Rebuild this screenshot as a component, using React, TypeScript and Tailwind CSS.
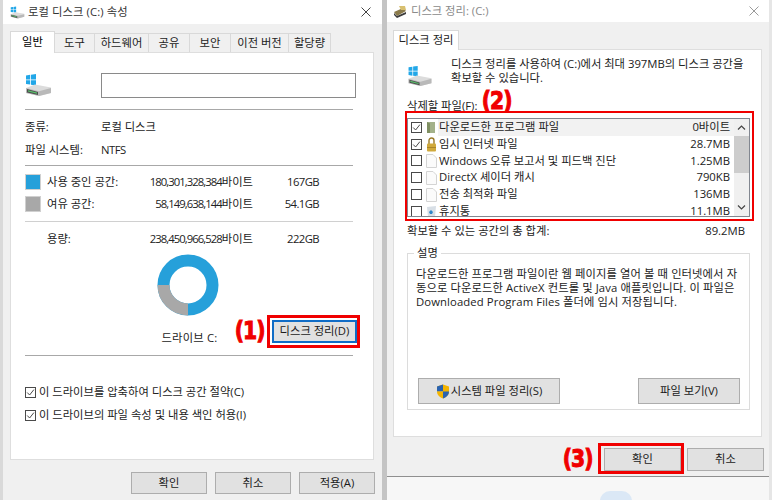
import React from "react";

const F = "font-['Open_Sans','Noto_Sans_CJK_KR',sans-serif]";

function DriveIcon({ w = 27, h = 24 }: { w?: number; h?: number }) {
  return (
    <svg width={w} height={h} viewBox="0 0 27 24">
      <g fill="#22a7e8">
        <path d="M1 2.500 5.200 1.800V6.400H1Z" />
        <path d="M6 1.700 11 1V6.400H6Z" />
        <path d="M1 7.200H5.200V11.600L1 11Z" />
        <path d="M6 7.200H11V12.400L6 11.700Z" />
      </g>
      <path d="M1 15 10 11.500 26 14.500V20L14 23 1 20Z" fill="#dcdcdc" />
      <path d="M1 15 14 18.200 26 15V20L14 23 1 20Z" fill="#b9b9b9" />
      <path d="M2 16 13 19V22L2 19.400Z" fill="#4d4d4d" />
      <path d="M3 17.200 12 19.600V20.800L3 18.600Z" fill="#57c26a" />
    </svg>
  );
}

function CleanIcon() {
  return (
    <svg width="14" height="13" viewBox="0 0 14 13">
      <path d="M1 7 10 3 13 6 4 11Z" fill="#8a7a4a" />
      <path d="M1 8 4 11 13 7V9L4 13 1 10Z" fill="#3b3b3b" />
      <path d="M6 1 12 1 13 5 8 5Z" fill="#d8c070" />
    </svg>
  );
}

function Check({ on }: { on: boolean }) {
  return (
    <span className="shrink-0 w-[11px] h-[11px] flex items-center justify-center bg-white border border-[#4a4a4a]">
      {on && (
        <svg width="9" height="9" viewBox="0 0 9 9">
          <path d="M1.200 4.500 3.600 7 7.900 1.600" fill="none" stroke="#4a4a4a" strokeWidth="1" />
        </svg>
      )}
    </span>
  );
}

function WinButton({ className, children }: { className: string; children: React.ReactNode }) {
  return (
    <div
      className={`flex items-center justify-center whitespace-nowrap bg-[#e1e1e1] border border-[#adadad] text-[11.3px] text-[#1a1a1a] ${className}`}
    >
      {children}
    </div>
  );
}

function Mark({ children, className }: { children: string; className: string }) {
  return (
    <span
      className={`absolute font-['DejaVu_Sans_Condensed','DejaVu_Sans',sans-serif] font-bold text-[25px] leading-none text-[#f00000] scale-x-[0.9] tracking-[-1px] [-webkit-text-stroke:1px_#f00000] ${className}`}
    >
      {children}
    </span>
  );
}

function TabLabel({ children, w }: { children: string; w: string }) {
  return (
    <div className={`${w} h-[19px] mt-[2px] flex items-center justify-center bg-[#f0f0f0] border border-b-0 border-l-0 border-[#d9d9d9] text-[11.3px] text-[#222] whitespace-nowrap`}>
      {children}
    </div>
  );
}

function Hr({ className }: { className: string }) {
  return <div className={`w-[328px] h-px bg-[#a8a8a8] ${className}`} />;
}

function Bytes({ n }: { n: string }) {
  return (
    <>
      <span className="tracking-[-0.95px]">{n}</span>바이트
    </>
  );
}

function Usage({ color, label, bytes, size }: { color: string; label: string; bytes: string; size: string }) {
  return (
    <div className="flex items-center h-[16px] whitespace-nowrap">
      <span className={`w-[16px] h-[16px] ${color} border border-[#d0d0d0]`} />
      <span className="w-[89px] ml-[6px]">{label}</span>
      <span className="w-[117px] text-right"><Bytes n={bytes} /></span>
      <span className="w-[66px] text-right tracking-[-0.6px]">{size}</span>
    </div>
  );
}

function LeftWindow() {
  return (
    <div className="absolute left-[3px] top-0 w-[379px] h-[500px] bg-[#f0f0f0] flex flex-col text-[11.3px]">
      <div className="h-[24px] bg-white flex items-center pl-[7px] pr-[11px] text-[#333]">
        <DriveIcon w={15} h={13} />
        <span className="ml-[3px] tracking-[0.1px]">로컬 디스크 (C:) 속성</span>
        <svg className="ml-auto" width="10" height="10" viewBox="0 0 10 10">
          <path d="M.500.500 9.500 9.500M9.500.500.500 9.500" stroke="#444" strokeWidth="1" />
        </svg>
      </div>
      <div className="flex pl-[7px] mt-[7px] h-[21px] relative z-10">
        <div className="w-[45px] h-[22px] flex items-center justify-center bg-white border border-b-0 border-[#d9d9d9]">일반</div>
        <TabLabel w="w-[40px]">도구</TabLabel>
        <TabLabel w="w-[54px]">하드웨어</TabLabel>
        <TabLabel w="w-[41px]">공유</TabLabel>
        <TabLabel w="w-[41px]">보안</TabLabel>
        <TabLabel w="w-[58px]">이전 버전</TabLabel>
        <TabLabel w="w-[42px]">할당량</TabLabel>
      </div>
      <div className="ml-[7px] w-[364px] h-[408px] bg-white border border-[#dedede] pl-[14px] text-[#222] flex flex-col relative">
        <div className="flex mt-[20px] h-[24px]">
          <div className="w-[76px]"><DriveIcon /></div>
          <div className="w-[255px] h-[25px] border border-[#8a8a8a]" />
        </div>
        <Hr className="mt-[12px]" />
        <div className="flex items-center mt-[7px] h-[20px]"><span className="w-[76px]">종류:</span><span>로컬 디스크</span></div>
        <div className="flex items-center mt-[3px] h-[20px]"><span className="w-[76px]">파일 시스템:</span><span className="tracking-[-0.5px]">NTFS</span></div>
        <Hr className="mt-[5px]" />
        <div className="mt-[8px] flex flex-col gap-[6px]">
          <Usage color="bg-[#26a0da]" label="사용 중인 공간:" bytes="180,301,328,384" size="167GB" />
          <Usage color="bg-[#a8a8a8]" label="여유 공간:" bytes="58,149,638,144" size="54.1GB" />
        </div>
        <Hr className="mt-[9px] h-[2px] bg-[#d0d0d0]" />
        <div className="flex items-center mt-[8px] h-[18px] pl-[22px] whitespace-nowrap">
          <span className="w-[89px]">용량:</span>
          <span className="w-[117px] text-right"><Bytes n="238,450,966,528" /></span>
          <span className="w-[66px] text-right tracking-[-0.6px]">222GB</span>
        </div>
        <div className="flex justify-center w-[327px] mt-[6px]">
          <svg className="ml-[-1px]" width="62" height="62" viewBox="0 0 62 62">
            <circle cx="31" cy="31" r="24.500" fill="none" stroke="#26a0da" strokeWidth="12" />
            <path d="M31 55.500A24.500 24.500 0 0 1 6.500 31" fill="none" stroke="#a8a8a8" strokeWidth="12" />
          </svg>
        </div>
        <div className="w-[328px] text-center mt-[13px] h-[18px] leading-[18px] pl-[1px] tracking-[0.2px]">드라이브 C:</div>
        <Hr className="mt-[8px]" />
        <div className="mt-[30px] flex flex-col gap-[10px]">
          <div className="flex items-center h-[13px] gap-[3px] whitespace-nowrap"><Check on /><span>이 드라이브를 압축하여 디스크 공간 절약(C)</span></div>
          <div className="flex items-center h-[13px] gap-[3px] whitespace-nowrap"><Check on /><span>이 드라이브의 파일 속성 및 내용 색인 허용(I)</span></div>
        </div>
        <WinButton className="absolute left-[261px] top-[267px] w-[85px] h-[23px] !border-2 !border-[#0f6cc6]">디스크 정리(D)</WinButton>
        <div className="absolute left-[256px] top-[262px] w-[93px] h-[33px] border-[3px] border-[#f00000]" />
        <Mark className="left-[222px] top-[265px]">(1)</Mark>
      </div>
      <div className="flex justify-end gap-[8px] pr-[7px] mt-[12px]">
        <WinButton className="w-[76px] h-[22px]">확인</WinButton>
        <WinButton className="w-[76px] h-[22px]">취소</WinButton>
        <WinButton className="w-[76px] h-[22px]">적용(A)</WinButton>
      </div>
    </div>
  );
}

function FileIcon({ kind }: { kind: string }) {
  if (kind === "folder")
    return (
      <svg width="10" height="13" viewBox="0 0 10 13">
        <path d="M1 1H9V12H1Z" fill="#a3b18a" />
        <path d="M1 1 4 2.500V12H1Z" fill="#7f8f62" />
      </svg>
    );
  if (kind === "lock")
    return (
      <svg width="11" height="15" viewBox="0 0 11 15">
        <path d="M3 7V3.500a2.500 2.500 0 0 1 5 0V7" fill="none" stroke="#9a7b2a" strokeWidth="1.400" />
        <rect x="1" y="6.500" width="9" height="8" rx="1" fill="#d0a93c" />
        <rect x="1" y="10" width="9" height="1" fill="#a9852a" />
      </svg>
    );
  if (kind === "bin")
    return (
      <svg width="11" height="13" viewBox="0 0 11 13">
        <path d="M1 2 10 1 9 12 2 12Z" fill="#d8dfe6" />
        <path d="M3 7 5 5 7 7 6 9 4 9Z" fill="#2f86c8" />
      </svg>
    );
  return (
    <svg width="11" height="14" viewBox="0 0 11 14">
      <path d="M.500.500H7L10.500 4V13.500H.500Z" fill="#fbfbfb" stroke="#d4d4d4" />
    </svg>
  );
}

const ROWS = [
  { on: true, icon: "folder", name: "다운로드한 프로그램 파일", size: "0바이트", sel: true },
  { on: true, icon: "lock", name: "임시 인터넷 파일", size: "28.7MB" },
  { on: false, icon: "doc", name: "Windows 오류 보고서 및 피드백 진단", size: "1.25MB" },
  { on: false, icon: "doc", name: "DirectX 셰이더 캐시", size: "790KB" },
  { on: false, icon: "doc", name: "전송 최적화 파일", size: "136MB" },
  { on: false, icon: "bin", name: "휴지통", size: "11.1MB" },
];

function RightWindow() {
  return (
    <div className="absolute left-[387px] top-0 w-[382px] h-[477px] bg-[#f0f0f0] flex flex-col border-b border-[#8f8f8f] text-[11.3px]">
      <div className="h-[22px] bg-white flex items-center pl-[6px] pr-[10px] text-[#8a8a8a]">
        <CleanIcon />
        <span className="ml-[4px]">디스크 정리: (C:)</span>
        <svg className="ml-auto" width="10" height="10" viewBox="0 0 10 10">
          <path d="M.500.500 9.500 9.500M9.500.500.500 9.500" stroke="#9a9a9a" strokeWidth="1" />
        </svg>
      </div>
      <div className="flex pl-[6px] mt-[8px] h-[19px]">
        <div className="w-[66px] h-[20px] flex items-center justify-center bg-white border border-b-0 border-[#d9d9d9] text-[#222] relative z-10 whitespace-nowrap">디스크 정리</div>
      </div>
      <div className="ml-[6px] w-[369px] h-[388px] bg-white border border-[#dedede] text-[#222] flex flex-col pl-[13px] relative">
        <div className="flex mt-[7px] h-[29px]">
          <div className="w-[44px] pt-[8px]"><DriveIcon w={26} h={22} /></div>
          <p className="leading-[14px] whitespace-nowrap">디스크 정리를 사용하여 (C:)에서 최대 397MB의 디스크 공간을<br />확보할 수 있습니다.</p>
        </div>
        <div className="mt-[11px] h-[18px] leading-[18px]">삭제할 파일(F):</div>
        <div className="mt-[3px] w-[343px] h-[99px] border border-[#828790] flex overflow-hidden bg-white">
          <div className="w-[327px] flex flex-col">
            {ROWS.map((r) => (
              <div key={r.name} className="h-[16.8px] shrink-0 flex items-center pl-[3px]">
                <Check on={r.on} />
                <span className="w-[14px] ml-[2px] flex justify-center"><FileIcon kind={r.icon} /></span>
                <div className={`flex-1 h-full flex items-center pr-[4px] pl-[1px] whitespace-nowrap ${r.sel ? "bg-[#f2f2f2]" : ""}`}>
                  <span>{r.name}</span>
                  <span className="ml-auto">{r.size}</span>
                </div>
              </div>
            ))}
          </div>
          <div className="w-[15px] bg-[#f0f0f0] flex flex-col items-center">
            <svg className="mt-[6px] mb-[6px]" width="9" height="5" viewBox="0 0 9 5"><path d="M1 4.500 4.500 1 8 4.500" fill="none" stroke="#444" strokeWidth="1.200" /></svg>
            <div className="w-full h-[37px] bg-[#cdcdcd]" />
            <svg className="mt-auto mb-[6px]" width="9" height="5" viewBox="0 0 9 5"><path d="M1 .500 4.500 4 8 .500" fill="none" stroke="#444" strokeWidth="1.200" /></svg>
          </div>
        </div>
        <div className="flex items-center w-[338px] mt-[5px] h-[18px]">
          <span>확보할 수 있는 공간의 총 합계:</span>
          <span className="ml-auto">89.2MB</span>
        </div>
        <fieldset className="mt-[6px] w-[343px] h-[164px] border border-[#dcdcdc] px-[8px] relative">
          <legend className="ml-[-2px] px-[3px] leading-[14px]">설명</legend>
          <p className="leading-[14px] mt-[7px] whitespace-nowrap tracking-[0.1px]">
            다운로드한 프로그램 파일이란 웹 페이지를 열어 볼 때 인터넷에서 자<br />
            동으로 다운로드한 ActiveX 컨트롤 및 Java 애플릿입니다. 이 파일은<br />
            Downloaded Program Files 폴더에 임시 저장됩니다.
          </p>
          <div className="flex justify-between pl-[2px] pr-[1px] mt-[69px]">
            <WinButton className="w-[142px] h-[26px] gap-[1px]">
              <svg width="14" height="15" viewBox="0 0 14 15">
                <path d="M7 .500 13 2.500V8c0 3-3 5.500-6 6.500V7.500H1V2.500Z" fill="#f4b400" />
                <path d="M7 .500V7.500H1V2.500Z" fill="#2a63b0" />
                <path d="M7 7.500H13C13 11 10 13.500 7 14.500Z" fill="#2a63b0" />
                <path d="M1 7.500H7V14.500C4 13.500 1 11 1 7.500Z" fill="#f4b400" />
              </svg>
              시스템 파일 정리(S)
            </WinButton>
            <WinButton className="w-[102px] h-[26px]">파일 보기(V)</WinButton>
          </div>
        </fieldset>
        <div className="absolute left-[11px] top-[61px] w-[349px] h-[110px] border-[2.5px] border-[#f00000]" />
        <Mark className="left-[86px] top-[38px]">(2)</Mark>
      </div>
      <div className="flex justify-end gap-[6px] pr-[5px] mt-[11px] relative">
        <WinButton className="w-[77px] h-[23px]">확인</WinButton>
        <WinButton className="w-[77px] h-[23px]">취소</WinButton>
        <div className="absolute left-[211px] top-[-5px] w-[86px] h-[31px] border-[3px] border-[#f00000]" />
        <Mark className="left-[174px] top-[-2px]">(3)</Mark>
      </div>
    </div>
  );
}

export default function App() {
  return (
    <div className={`relative w-[772px] h-[500px] overflow-hidden bg-[#f7f7f7] ${F}`}>
      <div className="absolute left-0 top-0 w-[3px] h-[500px] bg-[#d9d9d9]" />
      <div className="absolute left-[382px] top-0 w-[5px] h-[500px] bg-[#c4c4c4]" />
      <div className="absolute left-[769px] top-0 w-[3px] h-[500px] bg-[#e6e6e6]" />
      <div className="absolute left-[600px] top-[491px] w-[32px] h-[20px] rounded-full bg-[#dbe8f6]" />
      <LeftWindow />
      <RightWindow />
    </div>
  );
}
